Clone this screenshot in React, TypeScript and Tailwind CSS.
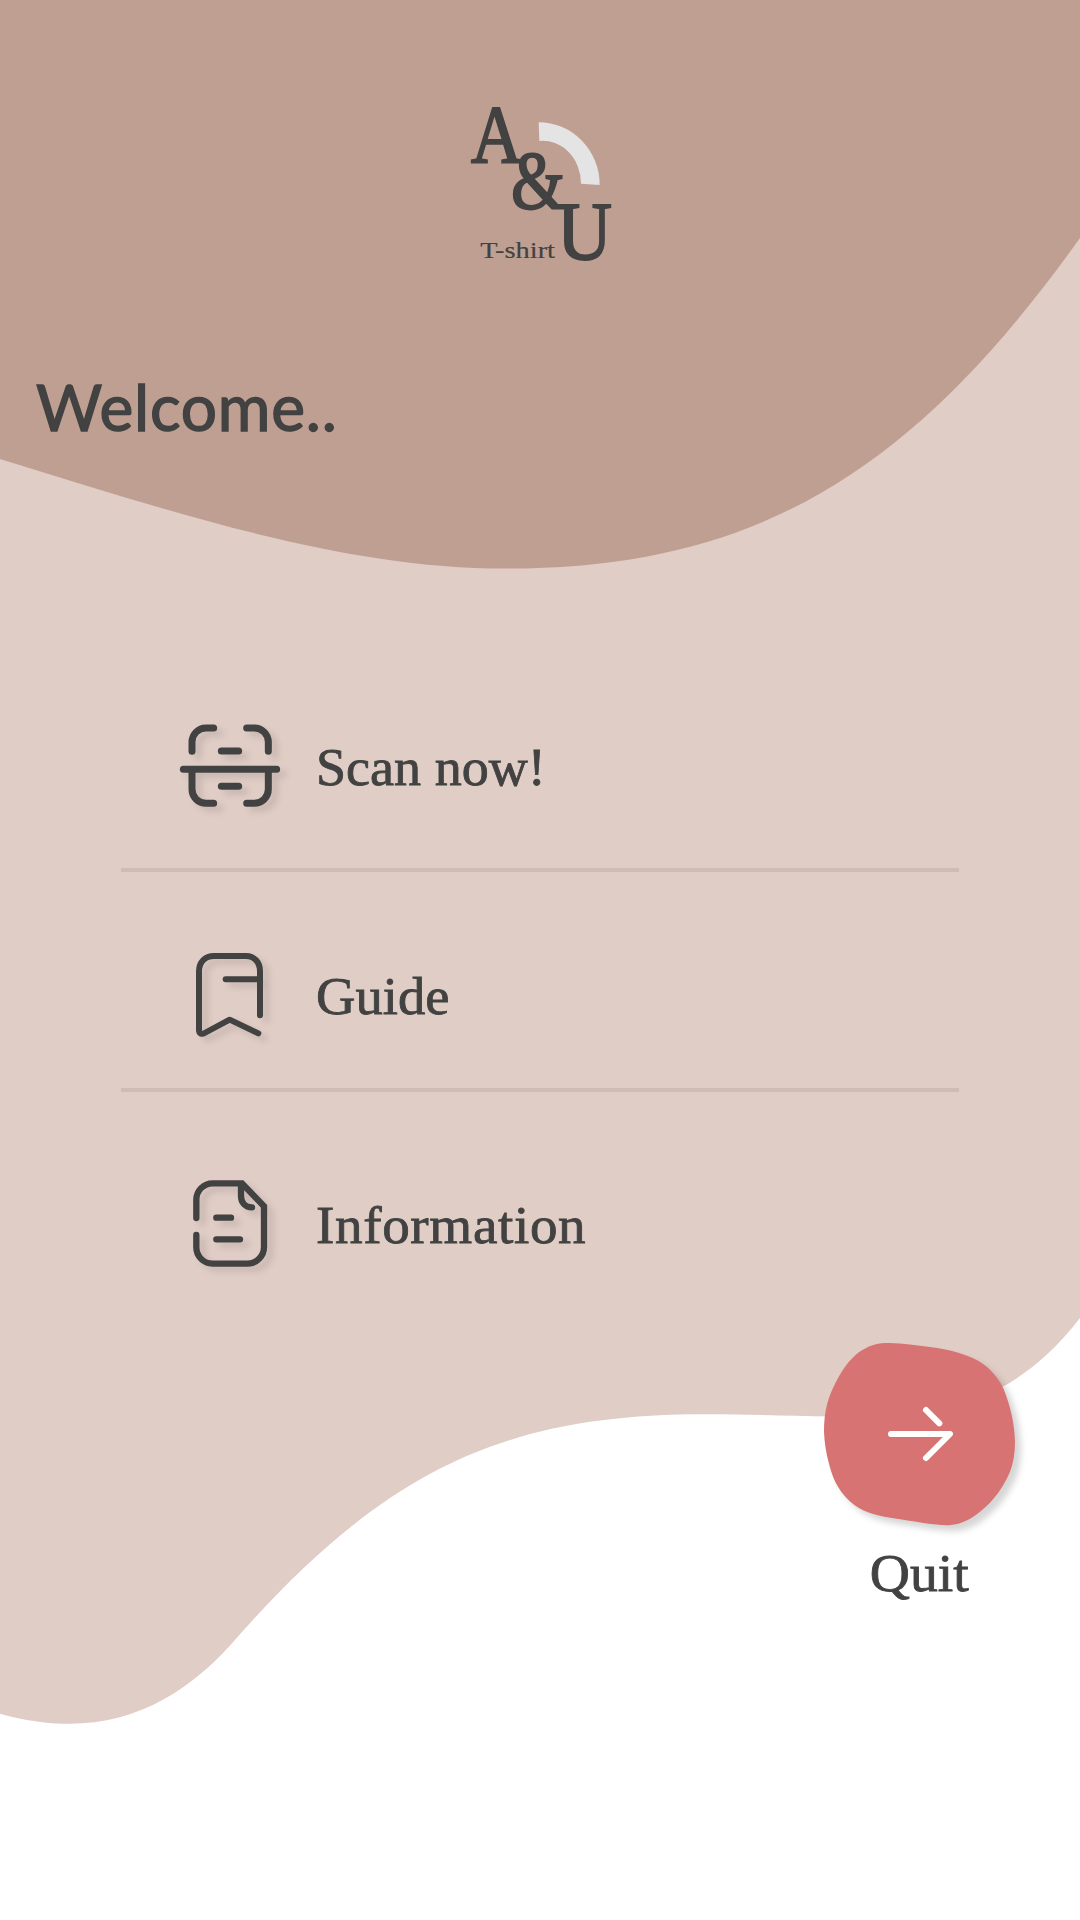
import type { ReactNode } from "react";

const SERIF = "font-['Liberation_Serif',serif]";

function Backdrop() {
  return (
    <svg className="absolute inset-0 h-full w-full" viewBox="0 0 1080 1920" aria-hidden="true">
      <path
        fill="#e0cdc6"
        d="M0 0H1080V1318C1008 1411 930 1418 830 1416.5C790 1416 750 1414.3 705 1414.3C510 1414.3 390 1466 241 1633C180 1706 105 1743 0 1713.7Z"
      />
      <path fill="#bf9f91" d="M0 0H1080V238C915 469 760 568.5 506 568.5C340 568.5 170 511 0 459Z" />
    </svg>
  );
}

function Logo() {
  return (
    <svg className="h-[190px] w-[180px] overflow-visible" viewBox="0 0 540 570" fill="#414241" stroke="#414241" role="img" aria-label="A&U T-shirt">
      <path stroke="none" fill="#e4e4e4" d="M266 97A183 187 0 0 1 449 285L393 281A115 128 0 0 0 268 153Z" />
      <g fontFamily="Liberation Serif, serif" strokeWidth="6">
        <text transform="translate(63 216) scale(.86 1)" fontSize="248">A</text>
        <text transform="translate(183 353) scale(.84 1)" fontSize="248">&amp;</text>
        <text transform="translate(321 506) scale(.92 1)" fontSize="248">U</text>
        <text x="91" y="503" fontSize="71" textLength="224" lengthAdjust="spacingAndGlyphs" strokeWidth="0.5">T-shirt</text>
      </g>
    </svg>
  );
}

const iconShadow = "overflow-visible drop-shadow-[6px_5px_3px_rgba(0,0,0,0.11)]";

function ScanIcon() {
  return (
    <svg className={`h-[85px] w-[100px] ${iconShadow}`} viewBox="30 40 300 255" fill="none" stroke="#414241" strokeWidth="21" strokeLinecap="round">
      <path d="M66 125V97a42 42 0 0 1 42-42H131M230 55H253a42 42 0 0 1 42 42V125M40 179H320M66 179V239a42 42 0 0 0 42 42H131M230 281H253a42 42 0 0 0 42-42V179M154 124H206M154 230H206" />
    </svg>
  );
}

function GuideIcon() {
  return (
    <svg className={`mr-px h-[84px] w-[67px] ${iconShadow}`} viewBox="78 39 201 252" fill="none" stroke="#414241" strokeWidth="18" strokeLinecap="round" strokeLinejoin="round">
      <path d="M270 226V94C270 66 252 48 228 48H132C106 48 87 66 87 94V270C87 281 95 284 104 279L179 239L265 280M167 118H270" />
    </svg>
  );
}

function InformationIcon() {
  return (
    <svg className={`h-[87px] w-[74px] ${iconShadow}`} viewBox="69 45 222 261" fill="none" stroke="#414241" strokeWidth="19" strokeLinecap="round">
      <path d="M79 159V104a49 49 0 0 1 49-49H216L282 124V246a50 50 0 0 1-50 50H128a49 49 0 0 1-49-49V210M213 60V92C213 113 226 127 246 127M139 158H183M139 223H210" />
    </svg>
  );
}

interface MenuItemProps {
  icon: ReactNode;
  label: string;
  className: string;
  labelClassName: string;
}

function MenuItem({ icon, label, className, labelClassName }: MenuItemProps) {
  return (
    <button className={`flex w-full items-center text-left ${className}`}>
      <span className="ml-[59px] flex w-[100px] shrink-0 justify-center">{icon}</span>
      <span
        className={`ml-[36px] origin-left whitespace-nowrap text-[52px] leading-[60px] [-webkit-text-stroke:0.8px_#414241] ${SERIF} ${labelClassName}`}
      >
        {label}
      </span>
    </button>
  );
}

export default function App() {
  return (
    <main className="relative h-[1920px] w-[1080px] overflow-hidden bg-white text-[#414241]">
      <Backdrop />
      <div className="relative flex h-full flex-col">
        <header className="flex h-[450px] flex-col pt-[90px]">
          <div className="pl-[450px]">
            <Logo />
          </div>
          <h1 className="mt-[87px] pl-[36px] font-['Lato',sans-serif] text-[64px] leading-[80px] font-normal tracking-[0.8px] [-webkit-text-stroke:1.4px_#414241]">
            Welcome..
          </h1>
        </header>

        <nav className="mr-[121.5px] ml-[121px] mt-[213px] flex flex-col">
          <MenuItem icon={<ScanIcon />} label="Scan now!" className="h-[205px]" labelClassName="mt-[5px] scale-x-[1.04]" />
          <hr className="h-1 border-0 bg-[#cfbcb5]" />
          <MenuItem icon={<GuideIcon />} label="Guide" className="h-[216px] pt-[30px]" labelClassName="mt-[3px] scale-x-[1.05]" />
          <hr className="h-1 border-0 bg-[#cfbcb5]" />
          <MenuItem icon={<InformationIcon />} label="Information" className="h-[215px] pt-[47px]" labelClassName="mt-[5px] scale-x-[1.06] tracking-[0.6px]" />
        </nav>

        <button className="mt-[36px] mr-[65px] flex w-[191px] flex-col items-center self-end">
          <svg className="h-[182px] w-[191px] overflow-visible drop-shadow-[6px_6px_3px_rgba(0,0,0,0.16)]" viewBox="42 39 573 546" fill="none">
            <path
              fill="#d87373"
              d="M42 305C42 272 45 246 52 220C64 180 82 145 100 118C130 74 168 42 225 39C270 37 315 45 360 51C405 57 450 67 488 84C530 103 560 134 580 175C602 228 614 285 615 335C615 370 610 400 600 425C575 485 535 530 490 560C455 583 425 587 395 585C355 582 300 572 260 566C210 559 165 549 133 525C90 493 69 450 58 405C48 370 43 335 42 305Z"
            />
            <path stroke="#fff" strokeWidth="18" strokeLinecap="round" strokeLinejoin="round" d="M243 312H420L348 384M348 240L388 280" />
          </svg>
          <span className={`mt-[19px] scale-x-[1.07] text-[52px] leading-[60px] [-webkit-text-stroke:0.8px_#414241] ${SERIF}`}>Quit</span>
        </button>
      </div>
    </main>
  );
}
